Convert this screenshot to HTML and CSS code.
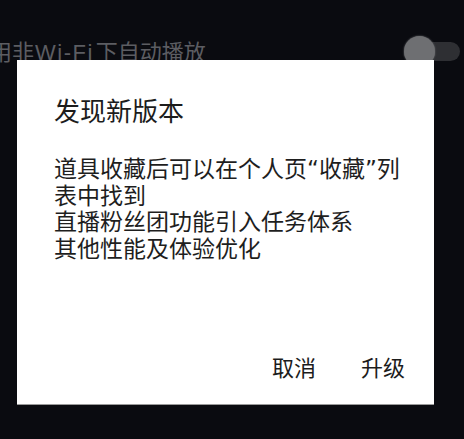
FILE: index.html
```html
<!DOCTYPE html>
<html lang="zh-CN">
<head>
<meta charset="utf-8">
<link rel="stylesheet" href="styles.css">
</head>
<body>
<div class="screen">
  <div class="setting-row">
    <span class="setting-label">用非<span class="latin">Wi-Fi</span>下自动播放</span>
    <span class="toggle"><span class="knob"></span></span>
  </div>
  <div class="dialog">
    <div class="dialog-title">发现新版本</div>
    <div class="dialog-body">道具收藏后可以在个人页“收藏”列表中找到<br>直播粉丝团功能引入任务体系<br>其他性能及体验优化</div>
    <div class="dialog-actions">
      <span class="btn">取消</span>
      <span class="btn">升级</span>
    </div>
  </div>
</div>
</body>
</html>
```
FILE: styles.css
```css
html, body {
  margin: 0;
  padding: 0;
  background: #0a0b10;
}
.screen {
  position: relative;
  width: 464px;
  height: 439px;
  overflow: hidden;
  background: #0a0b10;
  font-family: "Noto Sans CJK SC", "Noto Sans", sans-serif;
}
.setting-row {
  display: flex;
  align-items: center;
  justify-content: space-between;
  height: 30px;
  padding-top: 36px;
  padding-right: 4px;
}
.setting-label {
  color: #5c5d62;
  font-size: 22px;
  line-height: 30px;
  margin-left: -10px;
  white-space: nowrap;
}
.latin {
  font-family: "Liberation Sans", sans-serif;
  letter-spacing: 1.5px;
  margin: 0 2px 0 1px;
}
.toggle {
  position: relative;
  width: 48px;
  height: 19px;
  border-radius: 10px;
  background: #2e2f33;
}
.knob {
  position: absolute;
  left: -8px;
  top: -6px;
  width: 31px;
  height: 31px;
  border-radius: 50%;
  background: #6e6f72;
  box-shadow: 0 0 2px #6e6f72;
}
.dialog {
  position: absolute;
  left: 17px;
  top: 60px;
  width: 417px;
  height: 345px;
  box-sizing: border-box;
  background: #ffffff;
  border-bottom: 1px solid #9a9a9a;
  padding: 33px 29px 0 37px;
  display: flex;
  flex-direction: column;
}
.dialog-title {
  font-size: 26px;
  line-height: 34px;
  color: #1c1c1c;
}
.dialog-body {
  margin-top: 29px;
  font-family: "DejaVu Sans", "Noto Sans CJK SC", sans-serif;
  font-size: 23px;
  line-height: 26.6px;
  color: #1e1e1e;
  width: 351px;
}
.dialog-actions {
  margin-top: auto;
  display: flex;
  justify-content: flex-end;
  gap: 45px;
  padding-bottom: 23px;
}
.btn {
  font-size: 22px;
  line-height: 30px;
  color: #1c1c1c;
}
```
